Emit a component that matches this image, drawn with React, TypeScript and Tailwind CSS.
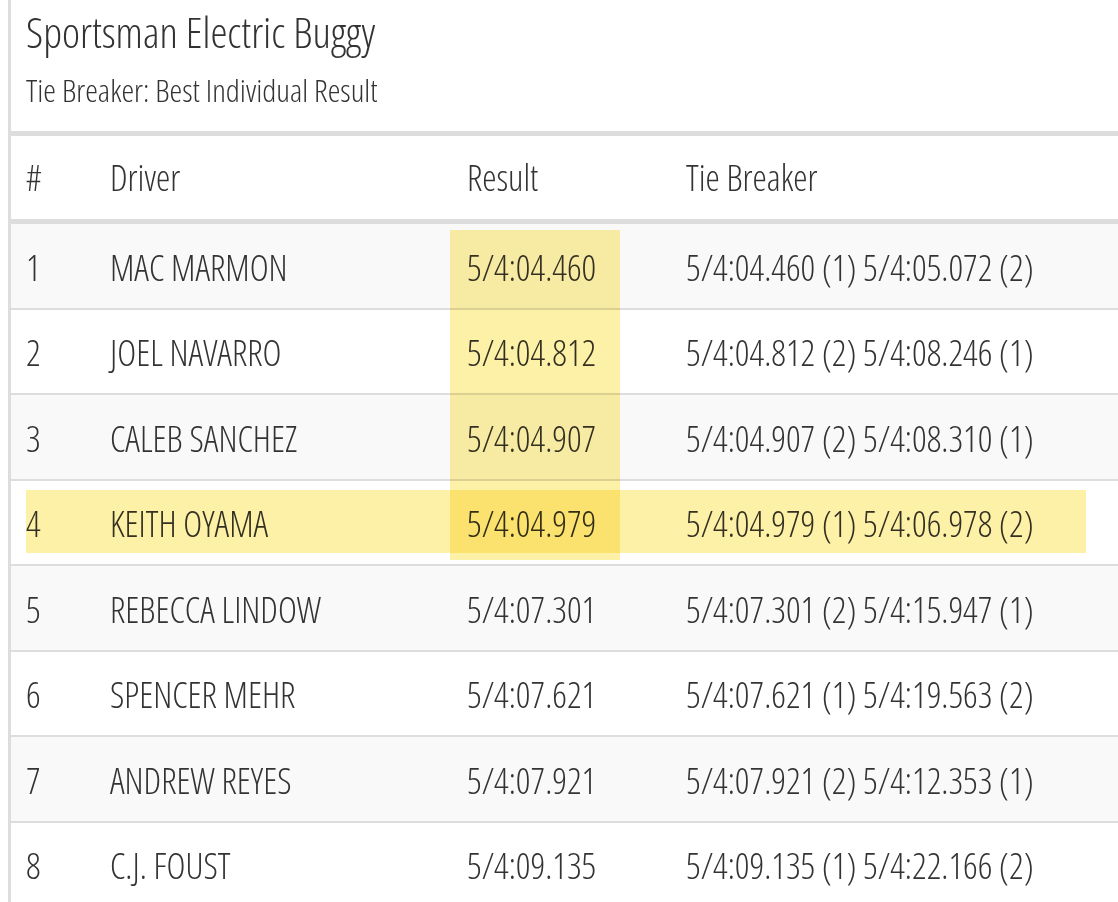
import React from "react";

const rows = [
  { pos: 1, driver: "MAC MARMON", result: "5/4:04.460", tie: "5/4:04.460 (1) 5/4:05.072 (2)" },
  { pos: 2, driver: "JOEL NAVARRO", result: "5/4:04.812", tie: "5/4:04.812 (2) 5/4:08.246 (1)" },
  { pos: 3, driver: "CALEB SANCHEZ", result: "5/4:04.907", tie: "5/4:04.907 (2) 5/4:08.310 (1)" },
  { pos: 4, driver: "KEITH OYAMA", result: "5/4:04.979", tie: "5/4:04.979 (1) 5/4:06.978 (2)" },
  { pos: 5, driver: "REBECCA LINDOW", result: "5/4:07.301", tie: "5/4:07.301 (2) 5/4:15.947 (1)" },
  { pos: 6, driver: "SPENCER MEHR", result: "5/4:07.621", tie: "5/4:07.621 (1) 5/4:19.563 (2)" },
  { pos: 7, driver: "ANDREW REYES", result: "5/4:07.921", tie: "5/4:07.921 (2) 5/4:12.353 (1)" },
  { pos: 8, driver: "C.J. FOUST", result: "5/4:09.135", tie: "5/4:09.135 (1) 5/4:22.166 (2)" },
];

export default function App() {
  return (
    <div className="w-[1118px] h-[902px] overflow-hidden bg-white font-['Open_Sans',sans-serif] font-light font-stretch-condensed text-[#333]">
      <div className="ml-[8px] border-l-[3px] border-[#ddd] h-full relative">
        <div className="pl-[15px] pt-[6px] h-[131px]">
          <h1 className="text-[43px] leading-[52px] whitespace-nowrap">Sportsman Electric Buggy</h1>
          <p className="text-[32px] leading-[40px] mt-[12px] whitespace-nowrap">Tie Breaker: Best Individual Result</p>
        </div>
        <div className="border-t-[5px] border-b-[5px] border-[#ddd] h-[93px] flex items-center pl-[15px] text-[36px] whitespace-nowrap">
          <div className="w-[84px]">#</div>
          <div className="w-[357px]">Driver</div>
          <div className="w-[219px]">Result</div>
          <div>Tie Breaker</div>
        </div>
        {rows.map((r) => (
          <div
            key={r.pos}
            className={`h-[85.5px] border-b-2 border-[#ddd] flex items-center pl-[15px] pt-[4px] text-[36px] whitespace-nowrap ${
              r.pos % 2 === 1 ? "bg-[#f9f9f9]" : "bg-white"
            }`}
          >
            <div className="w-[84px]">{r.pos}</div>
            <div className="w-[357px]">{r.driver}</div>
            <div className="w-[219px]">{r.result}</div>
            <div>{r.tie}</div>
          </div>
        ))}
        <div className="absolute left-[439px] top-[230px] w-[170px] h-[330px] bg-[#fdf0a7] mix-blend-multiply" />
        <div className="absolute left-[15px] top-[490px] w-[1060px] h-[63px] bg-[#fdf0a7] mix-blend-multiply" />
      </div>
    </div>
  );
}
